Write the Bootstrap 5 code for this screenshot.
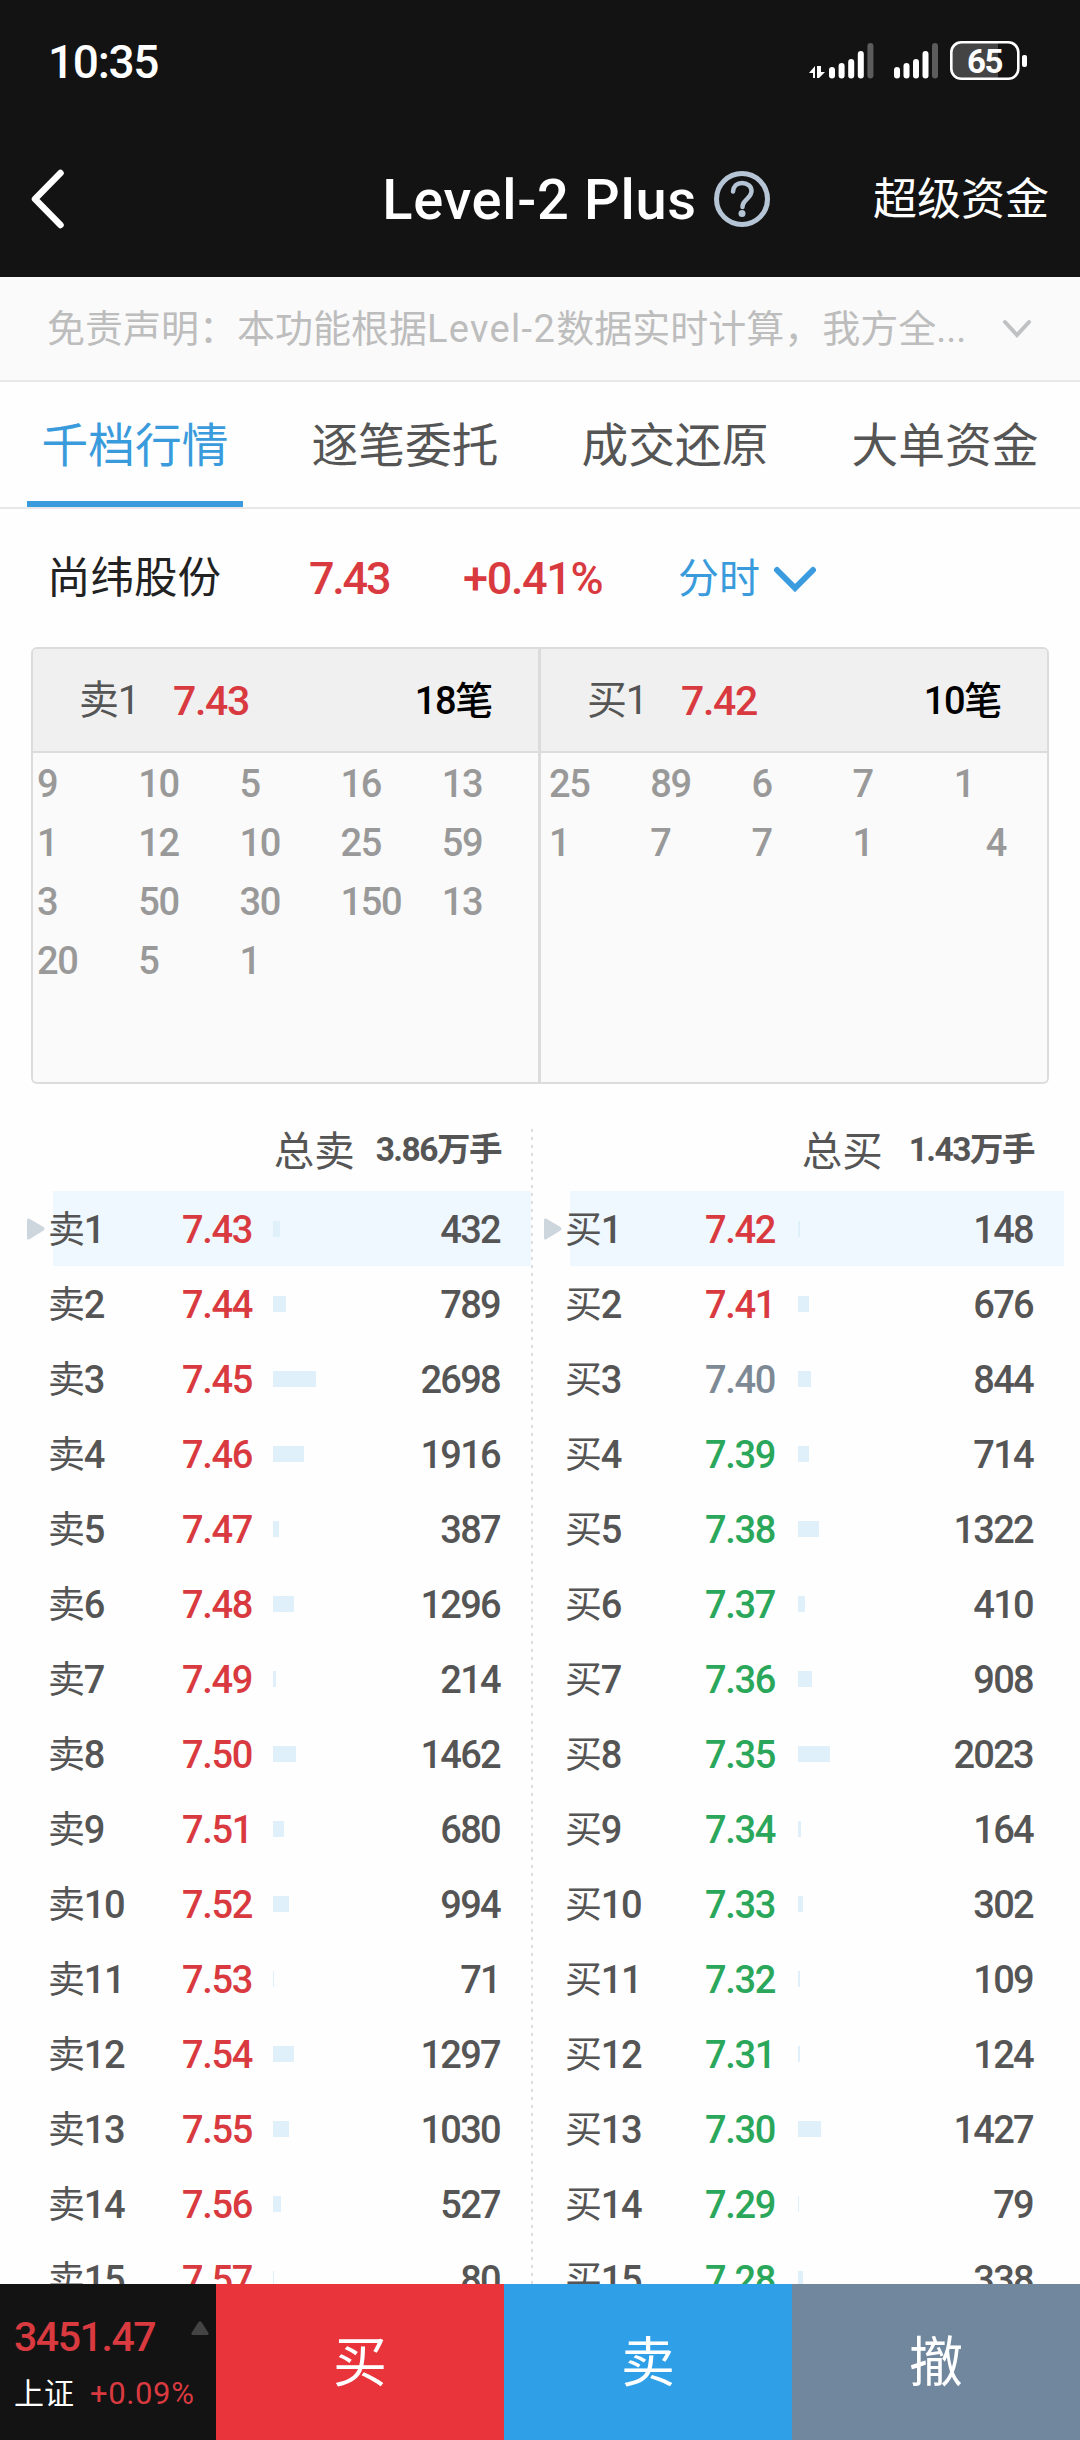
<!DOCTYPE html>
<html lang="zh-CN">
<head>
<meta charset="utf-8">
<meta name="viewport" content="width=device-width, initial-scale=1">
<title>Level-2 Plus</title>
<link href="https://cdn.jsdelivr.net/npm/bootstrap@5.3.0/dist/css/bootstrap.min.css" rel="stylesheet">
<style>
body{width:1080px;height:2440px;overflow:hidden;background:#fefefe;color:#555;font-family:Roboto,"Noto Sans CJK SC",sans-serif;font-size:38px;line-height:1;letter-spacing:-.035em}
.cjk{letter-spacing:0}
.up{color:#d93a40}.down{color:#2aa75a}.flat{color:#7d8a96}
.num{font-weight:500}
.topbar{height:277px;background:#131313;color:#fff}
.status{height:122px;padding:0 52px 0 48px}
.clock{font-size:46px;font-weight:500;padding-top:2px}
.titlebar{height:155px;padding:0 31px 1px 31px}
.side{width:200px}
.heading{margin-left:73px}
.title{font-size:56px;font-weight:500;letter-spacing:.012em;padding-top:3px;line-height:1.1}
.super{font-size:44px;letter-spacing:0;padding-top:2px}
.notice{height:105px;background:#fafafa;border-bottom:2px solid #e8e8e8;color:#bdbdbd;padding:0 48px 0 47px}
.notice span{font-size:38px;letter-spacing:0}
.notice .lat{letter-spacing:.035em}
.tabs{height:127px;border-bottom:2px solid #e8e8e8}
.tabs .nav-link{font-size:46.7px;letter-spacing:0;color:#555;border-radius:0;padding:10px 0 0;margin:0 27px;width:216px;border-bottom:6px solid transparent;height:125px;display:flex;align-items:center;justify-content:center;white-space:nowrap}
.tabs .nav-link.active{color:#3a9bdc;border-bottom-color:#3a9bdc}
.stock{height:138px;padding:2px 0 0 47px}
.stock .name{font-size:43.5px;width:262px;color:#222}
.stock .last{font-size:45px;width:154px;letter-spacing:-.05em}
.stock .pct{font-size:45px;width:215px}
.stock .num{padding-bottom:2px}
.stock .period{font-size:41px;color:#3a9bdc;width:95px}
.queue{margin:0 31px;height:437px;border:2px solid #dcdcdc;border-radius:6px;background:#fafafa;overflow:hidden}
.queue .half{flex:0 0 505px;min-width:0}
.queue .half+.half{flex:1;border-left:3px solid #dcdcdc}
.half-head{height:104px;background:#f0f0f0;border-bottom:2px solid #dcdcdc;padding:2px 46px 0 46px}
.half-head .lbl{font-size:40px;width:94px}
.half-head .px{font-size:41px}
.half-head .cnt{font-size:38px;color:#000}
.lots{display:grid;grid-template-columns:repeat(4,101.2px) 1fr;grid-auto-rows:59px;padding:1px 0 0 4px;color:#999;letter-spacing:-.035em}
.lots>span{display:flex;align-items:center;font-weight:500}
.book{height:1200px;overflow:hidden}
.book-wrap{padding-top:45px}
.ask{width:531px}
.bid{width:529px;margin-left:2px}
.sep{width:2px;background:repeating-linear-gradient(#ddd 0 3px,transparent 3px 8px)}
.sum{height:62px;padding-bottom:16px}
.sum .t{font-size:40.5px}
.sum .v{font-size:33.5px;font-weight:700;padding-bottom:5px;letter-spacing:-.045em}
.ask .sum{padding-right:30px}.bid .sum{padding-right:30px}
.ask .sum .v{margin-left:21px}.bid .sum .v{margin-left:26px}
.lvl{height:75px;display:flex;align-items:center;padding-top:1px!important}
.ask .lvl{padding:0 31px 0 27px}
.bid .lvl{padding:0 31px 0 9px}
.ask .lvl.on{background:linear-gradient(90deg,transparent 53px,#f0f8ff 53px)}
.bid .lvl.on{background:linear-gradient(90deg,transparent 35px,#f0f8ff 35px)}
.arr{width:21px;flex:none;display:flex}
.lvl .lab{width:134px;flex:none}
.bid .lvl .lab{width:140px}
.lvl .lab b{font-weight:400;font-size:37px}
.lvl .p,.lvl .q,.lvl .lab{padding-top:1px}
.lvl .p{width:91px;flex:none}
.bid .lvl .p{width:93px}
.meter{height:16px;background:#e0f0fb}
.lvl .q{margin-left:auto;letter-spacing:-.045em}
.footbar{height:156px}
.index{width:216px;background:#131313;padding:33px 7px 0 14px}
.index .val{font-size:41px;letter-spacing:-.035em;font-weight:500}
.index .sh{font-size:30px;color:#fff}
.index .chg{font-size:31px;letter-spacing:.02em}
.act{flex:1;border-radius:0;border:0;color:#fff;font-size:54px;font-weight:400;letter-spacing:0;padding:2px 0 0}
.buy{background:#e9343b}.sell{background:#2f9fe8}.cancel{background:#70879e}
</style>
</head>
<body>
<div class="d-flex flex-column h-100">
<header class="topbar flex-shrink-0">
  <div class="status d-flex align-items-center justify-content-between">
    <span class="clock">10:35</span>
    <svg width="219" height="40" viewBox="810 41 219 40" fill="#fff">
      <path d="M810 73l6-7v12h-2v-5zM818 66h2v12h-2zM820 66h2v6h4l-6 6z"/>
      <g><rect x="830" y="67" width="6" height="11.500" rx="3"/><rect x="839.600" y="63" width="6" height="15.500" rx="3"/><rect x="849.200" y="59" width="6" height="19.500" rx="3"/><rect x="858.800" y="51" width="6" height="27.500" rx="3"/><rect x="868.400" y="43" width="6" height="35.500" rx="3" fill="#5c5c5c"/></g>
      <g><rect x="895" y="67" width="6" height="11.500" rx="3"/><rect x="904.500" y="63" width="6" height="15.500" rx="3"/><rect x="914" y="59" width="6" height="19.500" rx="3"/><rect x="923.500" y="51" width="6" height="27.500" rx="3"/><rect x="933" y="43" width="6" height="35.500" rx="3" fill="#5c5c5c"/></g>
      <path d="M962 43h37v35h-37q-9 0-9-9V52q0-9 9-9z" fill="#444"/>
      <rect x="952.300" y="42.300" width="67" height="36.500" rx="10" fill="none" stroke="#fff" stroke-width="2.600"/>
      <rect x="1023" y="55" width="5" height="12" rx="2"/>
      <text x="985.500" y="73" font-size="33" font-weight="700" text-anchor="middle">65</text>
    </svg>
  </div>
  <div class="titlebar d-flex align-items-center justify-content-between">
    <div class="side"><svg class="d-block" width="34" height="60" viewBox="0 0 34 60" fill="none" stroke="#fff" stroke-width="6.500" stroke-linecap="round" stroke-linejoin="round"><path d="M29.500 4L4 30l25.500 26"/></svg></div>
    <div class="heading d-flex align-items-center">
      <span class="title text-nowrap">Level-2 Plus</span>
      <svg class="ms-3" width="58" height="58" viewBox="0 0 58 58" fill="none" stroke="#b6c5d5"><circle cx="29" cy="29" r="25.500" stroke-width="5"/><path d="M20 21.500c.5-5.500 4-8.500 9-8.500 5.500 0 9.500 3.500 9.500 8 0 3.500-2 5.500-4.500 8-3 3-4.500 4.500-4.500 8" stroke-width="4.500" stroke-linecap="round"/><circle cx="29" cy="43.500" r="3.500" fill="#b6c5d5" stroke="none"/></svg>
    </div>
    <span class="side super text-end text-nowrap">超级资金</span>
  </div>
</header>
<div class="notice d-flex align-items-center justify-content-between flex-shrink-0">
  <span class="text-nowrap">免责声明：本功能根据<span class="lat">Level-2</span>数据实时计算，我方全...</span>
  <svg width="30" height="20" viewBox="0 0 30 20" fill="none" stroke="#bfc1c3" stroke-width="4" stroke-linecap="round"><path d="M3 3l12 13L27 3"/></svg>
</div>
<nav class="tabs nav flex-nowrap flex-shrink-0">
  <a class="nav-link active">千档行情</a><a class="nav-link">逐笔委托</a><a class="nav-link">成交还原</a><a class="nav-link">大单资金</a>
</nav>
<div class="stock d-flex align-items-center flex-shrink-0">
  <span class="name cjk">尚纬股份</span><span class="last num up">7.43</span><span class="pct num up">+0.41%</span><span class="period cjk">分时</span>
  <svg width="44" height="28" viewBox="0 0 44 28" fill="none" stroke="#3a9bdf" stroke-width="6" stroke-linecap="round"><path d="M4 5l18 18L40 5"/></svg>
</div>
<section class="queue d-flex flex-shrink-0">
  <div class="half">
    <div class="half-head d-flex align-items-center"><span class="lbl">卖1</span><span class="px num up">7.43</span><span class="cnt num ms-auto">18笔</span></div>
    <div class="lots"><span>9</span><span>10</span><span>5</span><span>16</span><span>13</span><span>1</span><span>12</span><span>10</span><span>25</span><span>59</span><span>3</span><span>50</span><span>30</span><span>150</span><span>13</span><span>20</span><span>5</span><span>1</span></div>
  </div>
  <div class="half">
    <div class="half-head d-flex align-items-center"><span class="lbl">买1</span><span class="px num up">7.42</span><span class="cnt num ms-auto">10笔</span></div>
    <div class="lots ps-2"><span>25</span><span>89</span><span>6</span><span>7</span><span>1</span><span>1</span><span>7</span><span>7</span><span>1</span><span class="ps-4 ms-2">4</span></div>
  </div>
</section>
<main class="book book-wrap d-flex">
  <div class="ask"><div class="sum d-flex align-items-center justify-content-end"><span class="t cjk">总卖</span><span class="v">3.86万手</span></div><div id="asks"></div></div>
  <div class="sep"></div>
  <div class="bid"><div class="sum d-flex align-items-center justify-content-end"><span class="t cjk">总买</span><span class="v">1.43万手</span></div><div id="bids"></div></div>
</main>
<footer class="footbar d-flex flex-shrink-0">
  <div class="index">
    <div class="d-flex justify-content-between"><span class="val up">3451.47</span><svg width="18" height="14" viewBox="0 0 18 14" fill="#444" class="mt-1"><path d="M7.500 1q1.500-1.500 3 0l7 11q.5 2-1.500 2H2q-2 0-1.500-2z"/></svg></div>
    <div class="d-flex align-items-center pt-3 mt-1"><span class="sh cjk">上证</span><span class="chg up ms-3">+0.09%</span></div>
  </div>
  <button class="btn act buy">买</button><button class="btn act sell">卖</button><button class="btn act cancel">撤</button>
</footer>
</div>
<script src="https://cdn.jsdelivr.net/npm/bootstrap@5.3.0/dist/js/bootstrap.bundle.min.js"></script>
<script>
const arrow='<svg width="18" height="22" viewBox="0 0 18 22" fill="#cdd5dd"><path d="M0 2q0-2 2-1.500l14.500 8.500q2 2 0 3.500L2 21.500q-2 .5-2-1.500z"/></svg>';
const PREV_CLOSE=740;
function fill(id,name,start,step,vols){
  document.getElementById(id).innerHTML=vols.map((v,i)=>{
    const c=start+step*i, cls=c>PREV_CLOSE?'up':c<PREV_CLOSE?'down':'flat';
    return `<div class="lvl${i?'':' on'}"><span class="arr">${i?'':arrow}</span><span class="lab num"><b>${name}</b>${i+1}</span><span class="p num ${cls}">${(c/100).toFixed(2)}</span><span class="meter" style="width:${Math.max(1,v*.0159).toFixed(1)}px"></span><span class="q num">${v}</span></div>`;
  }).join('');
}
fill('asks','卖',743,1,[432,789,2698,1916,387,1296,214,1462,680,994,71,1297,1030,527,80]);
fill('bids','买',742,-1,[148,676,844,714,1322,410,908,2023,164,302,109,124,1427,79,338]);
</script>
</body>
</html>
